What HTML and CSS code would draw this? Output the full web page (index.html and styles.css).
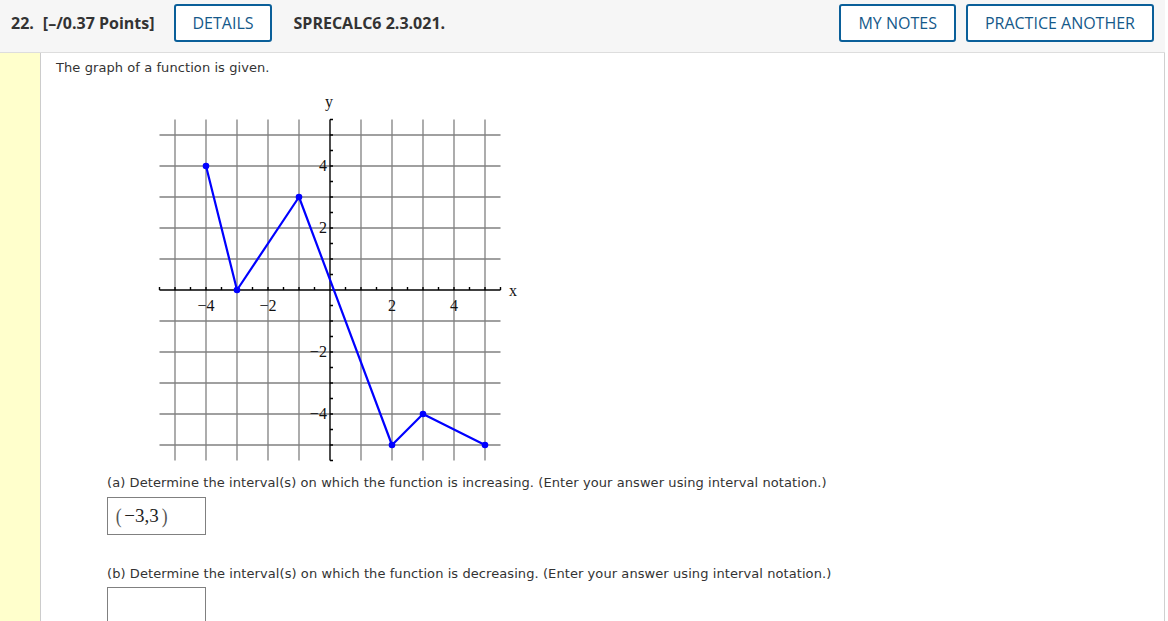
FILE: index.html
```html
<!DOCTYPE html>
<html lang="en">
<head>
<meta charset="utf-8">
<title>Question 22</title>
<link rel="stylesheet" href="styles.css">
</head>
<body>
<div class="question">
  <header class="q-head">
    <span class="q-num">22.</span>
    <span class="q-points">[–/0.37 Points]</span>
    <button class="btn btn-details">DETAILS</button>
    <span class="q-code">SPRECALC6 2.3.021.</span>
    <span class="spacer"></span>
    <button class="btn">MY NOTES</button>
    <button class="btn">PRACTICE ANOTHER</button>
  </header>
  <div class="q-body">
    <aside class="q-side"></aside>
    <div class="q-content">
      <p class="intro">The graph of a function is given.</p>
      <svg class="graph" width="380" height="385" viewBox="0 0 380 385" xmlns="http://www.w3.org/2000/svg">
        <g class="grid" stroke="#808080" stroke-width="1.3" fill="none">
          <line x1="25" y1="29.5" x2="25" y2="370.5"/>
          <line x1="56" y1="29.5" x2="56" y2="370.5"/>
          <line x1="87" y1="29.5" x2="87" y2="370.5"/>
          <line x1="118" y1="29.5" x2="118" y2="370.5"/>
          <line x1="149" y1="29.5" x2="149" y2="370.5"/>
          <line x1="211" y1="29.5" x2="211" y2="370.5"/>
          <line x1="242" y1="29.5" x2="242" y2="370.5"/>
          <line x1="273" y1="29.5" x2="273" y2="370.5"/>
          <line x1="304" y1="29.5" x2="304" y2="370.5"/>
          <line x1="335" y1="29.5" x2="335" y2="370.5"/>
          <line x1="9.5" y1="45" x2="350.5" y2="45"/>
          <line x1="9.5" y1="76" x2="350.5" y2="76"/>
          <line x1="9.5" y1="107" x2="350.5" y2="107"/>
          <line x1="9.5" y1="138" x2="350.5" y2="138"/>
          <line x1="9.5" y1="169" x2="350.5" y2="169"/>
          <line x1="9.5" y1="231" x2="350.5" y2="231"/>
          <line x1="9.5" y1="262" x2="350.5" y2="262"/>
          <line x1="9.5" y1="293" x2="350.5" y2="293"/>
          <line x1="9.5" y1="324" x2="350.5" y2="324"/>
          <line x1="9.5" y1="355" x2="350.5" y2="355"/>
        </g>
        <g class="labels" font-family="'Liberation Serif', 'DejaVu Serif', serif" font-size="16" fill="#111">
          <text x="56" y="221" text-anchor="middle">−4</text>
          <text x="118" y="221" text-anchor="middle">−2</text>
          <text x="242" y="221" text-anchor="middle">2</text>
          <text x="304" y="221" text-anchor="middle">4</text>
          <text x="177" y="81" text-anchor="end">4</text>
          <text x="177" y="143" text-anchor="end">2</text>
          <text x="177" y="267" text-anchor="end">−2</text>
          <text x="177" y="329" text-anchor="end">−4</text>
          <text x="363" y="206" text-anchor="middle">x</text>
          <text x="179" y="17" text-anchor="middle">y</text>
        </g>
        <g class="axes" stroke="#000" stroke-width="1.4" fill="none">
          <line x1="9.5" y1="200" x2="350.5" y2="200"/>
          <line x1="180" y1="29.5" x2="180" y2="370.5"/>
          <path d="M180 29.5h3M180 370.5h3"/>
          <path d="M9.5 200v-3M25 200v-3M40.5 200v-3M56 200v-3M71.5 200v-3M87 200v-3M102.5 200v-3M118 200v-3M133.5 200v-3M149 200v-3M164.5 200v-3M195.5 200v-3M211 200v-3M226.5 200v-3M242 200v-3M257.5 200v-3M273 200v-3M288.5 200v-3M304 200v-3M319.5 200v-3M335 200v-3M350.5 200v-3"/>
          <path d="M180 45h3M180 60.5h3M180 76h3M180 91.5h3M180 107h3M180 122.5h3M180 138h3M180 153.5h3M180 169h3M180 184.5h3M180 215.5h3M180 231h3M180 246.5h3M180 262h3M180 277.5h3M180 293h3M180 308.5h3M180 324h3M180 339.5h3M180 355h3"/>
        </g>
        <g class="curve">
          <polyline points="56,76 87,200 149,107 242,355 273,324 335,355" fill="none" stroke="#0000ff" stroke-width="2.2" stroke-linejoin="round"/>
          <g fill="#0000ff">
            <circle cx="56" cy="76" r="3.3"/>
            <circle cx="87" cy="200" r="3.3"/>
            <circle cx="149" cy="107" r="3.3"/>
            <circle cx="242" cy="355" r="3.3"/>
            <circle cx="273" cy="324" r="3.3"/>
            <circle cx="335" cy="355" r="3.3"/>
          </g>
        </g>
      </svg>
      <div class="part">
        <p class="part-text">(a) Determine the interval(s) on which the function is increasing. (Enter your answer using interval notation.)</p>
        <div class="answer"><span class="paren">(</span><span class="math">−3,3</span><span class="paren">)</span></div>
      </div>
      <div class="part part-b">
        <p class="part-text">(b) Determine the interval(s) on which the function is decreasing. (Enter your answer using interval notation.)</p>
        <div class="answer"></div>
      </div>
    </div>
  </div>
</div>
</body>
</html>
```
FILE: styles.css
```css
html, body {
  margin: 0;
  padding: 0;
  background: #ffffff;
}

body {
  font-family: "DejaVu Sans", Verdana, sans-serif;
  color: #333333;
  overflow: hidden;
}

.question {
  width: 1165px;
}

.q-head {
  display: flex;
  align-items: center;
  height: 38px;
  padding: 4px 11px 10px 11px;
  background: #f6f6f6;
  border-bottom: 1px solid #dddddd;
  font-family: "Open Sans", "Liberation Sans", sans-serif;
  font-size: 16px;
  font-weight: 700;
  color: #333333;
}

.q-num {
  margin-right: 9px;
}

.q-points {
  margin-right: 20px;
}

.q-code {
  margin-left: 22px;
}

.spacer {
  flex: 1;
}

.btn {
  height: 38px;
  box-sizing: border-box;
  padding: 0 17px;
  border: 2px solid #0a5f99;
  border-radius: 3px;
  background: #ffffff;
  color: #15598a;
  font-family: "Open Sans", "Liberation Sans", sans-serif;
  font-size: 16px;
  font-weight: 500;
  cursor: pointer;
}

.btn-details {
  padding: 0 16px;
}

.btn + .btn {
  margin-left: 10px;
}

.q-body {
  display: flex;
  border-right: 1px solid #d0d0d0;
  min-height: 568px;
}

.q-side {
  width: 40px;
  flex: none;
  background: #ffffcc;
  border-right: 1px solid #cccccc;
}

.q-content {
  flex: 1;
  padding: 7px 15px 0 15px;
  font-size: 13px;
  line-height: 16px;
  letter-spacing: 0.08px;
}

.intro {
  margin: 0;
}

.graph {
  display: block;
  margin: 14px 0 0 94px;
}

.part {
  margin-left: 51px;
}

.part-text {
  margin: 0 0 6px 0;
}

.part-b {
  margin-top: 31px;
}

.part-b .part-text {
  margin-bottom: 5px;
}

.answer {
  box-sizing: border-box;
  width: 99px;
  height: 38px;
  border: 1px solid #808080;
  padding: 0 0 0 7px;
  display: flex;
  align-items: center;
  font-family: "Liberation Serif", "DejaVu Serif", serif;
  font-size: 19px;
  letter-spacing: 0;
  color: #222222;
}

.answer .paren {
  font-size: 22px;
  color: #555555;
  transform: scaleX(0.8);
}

.answer .math {
  padding: 0 2px;
}
```
